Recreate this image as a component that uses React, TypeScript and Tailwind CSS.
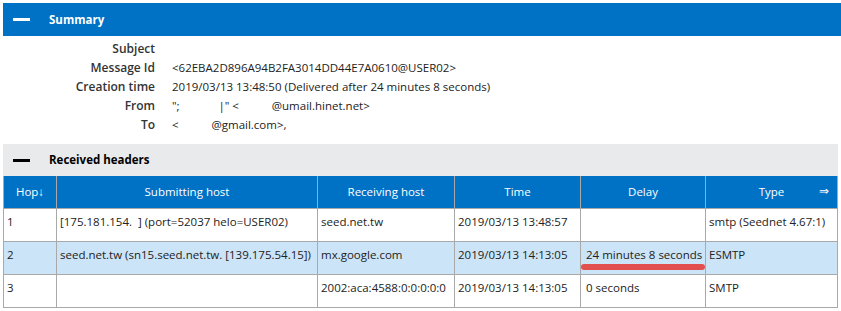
const summary = [
  { label: 'Subject', value: '' },
  { label: 'Message Id', value: '<62EBA2D896A94B2FA3014DD44E7A0610@USER02>' },
  { label: 'Creation time', value: '2019/03/13 13:48:50 (Delivered after 24 minutes 8 seconds)' },
  { label: 'From', value: '"\u037E             |" <           @umail.hinet.net>' },
  { label: 'To', value: '<           @gmail.com>,' },
];

const hops = [
  {
    hop: '1',
    from: '[175.181.154.  ] (port=52037 helo=USER02)',
    by: 'seed.net.tw',
    time: '2019/03/13 13:48:57',
    delay: '',
    type: 'smtp (Seednet 4.67:1)',
  },
  {
    hop: '2',
    from: 'seed.net.tw (sn15.seed.net.tw. [139.175.54.15])',
    by: 'mx.google.com',
    time: '2019/03/13 14:13:05',
    delay: '24 minutes 8 seconds',
    type: 'ESMTP',
    highlight: true,
  },
  {
    hop: '3',
    from: '',
    by: '2002:aca:4588:0:0:0:0:0',
    time: '2019/03/13 14:13:05',
    delay: '0 seconds',
    type: 'SMTP',
  },
];

const cols = [
  { name: 'Hop\u2193', w: 'w-[53px]' },
  { name: 'Submitting host', w: 'w-[261px]' },
  { name: 'Receiving host', w: 'w-[137px]' },
  { name: 'Time', w: 'w-[126px]' },
  { name: 'Delay', w: 'w-[125px]' },
  { name: 'Type', w: 'w-[132px]' },
];

function Minus({ dark }: { dark?: boolean }) {
  return <div className={`w-[17px] h-[3px] ${dark ? 'bg-black' : 'bg-white'}`} />;
}

export default function App() {
  return (
    <div className="bg-white w-[841px] h-[311px] pt-[3px] pl-[3px] text-[11.5px] text-[#222] font-['Open_Sans',sans-serif]">
      {/* Summary */}
      <div className="h-[33px] bg-[#0072c6] flex items-center pl-[10px]">
        <Minus />
        <span className="ml-[19px] text-white font-bold text-[11.5px]">Summary</span>
      </div>
      <div className="mt-[3px] flex flex-col">
        {summary.map((r) => (
          <div key={r.label} className="flex h-[19px] items-center">
            <div className="w-[152px] text-right font-semibold text-[12px] text-[#333]">{r.label}</div>
            <div className="ml-[17px] whitespace-pre">{r.value}</div>
          </div>
        ))}
      </div>

      {/* Received headers */}
      <div className="mt-[10px] w-[835px] h-[32px] bg-[#e9eaec] flex items-center pl-[10px]">
        <Minus dark />
        <span className="ml-[19px] font-bold text-black text-[11.5px]">Received headers</span>
      </div>
      <table className="w-[835px] border-collapse table-fixed">
        <thead>
          <tr className="h-[32px] bg-[#0072c6] text-white">
            {cols.map((c, i) => (
              <th
                key={c.name}
                className={`${c.w} border border-[#a9a9a9] border-t-0 font-normal text-[11.5px] text-center relative`}
              >
                {c.name}
                {i === cols.length - 1 && (
                  <span className="absolute right-[8px] top-[6px] text-[12px]">{'\u21D2'}</span>
                )}
              </th>
            ))}
          </tr>
        </thead>
        <tbody>
          {hops.map((h) => (
            <tr key={h.hop} className={`h-[33px] ${h.highlight ? 'bg-[#cce4f7]' : 'bg-white'}`}>
              <td className="border border-[#a9a9a9] pl-[3px] pb-[5px]">{h.hop}</td>
              <td className="border border-[#a9a9a9] pl-[3px] pb-[5px] whitespace-pre">{h.from}</td>
              <td className="border border-[#a9a9a9] pl-[3px] pb-[5px] whitespace-nowrap">{h.by}</td>
              <td className="border border-[#a9a9a9] pl-[3px] pb-[5px] whitespace-nowrap">{h.time}</td>
              <td className="border border-[#a9a9a9] pl-[5px] pb-[5px] relative whitespace-nowrap">
                {h.delay}
                {h.highlight && (
                  <div className="absolute left-0 right-0 bottom-[4px] h-[6px] rounded-full bg-[#e24f4f]" />
                )}
              </td>
              <td className="border border-[#a9a9a9] pl-[3px] pb-[5px] whitespace-nowrap">{h.type}</td>
            </tr>
          ))}
        </tbody>
      </table>
    </div>
  );
}
